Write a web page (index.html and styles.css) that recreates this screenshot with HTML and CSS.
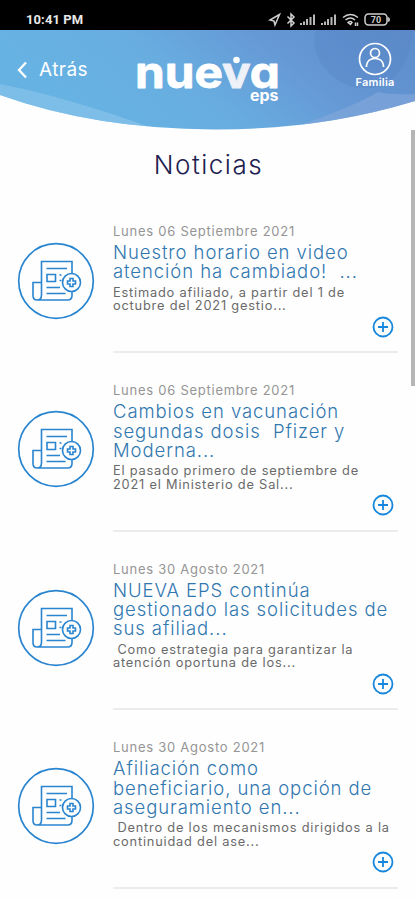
FILE: index.html
```html
<!DOCTYPE html>
<html lang="es">
<head>
<meta charset="utf-8">
<title>Noticias</title>
<link rel="stylesheet" href="styles.css">
</head>
<body>
<svg class="defs" width="0" height="0" aria-hidden="true">
  <symbol id="news" viewBox="0 0 78 78">
    <circle cx="39" cy="39" r="37.3" stroke-width="1.7"/>
    <path d="M24.500 53V19.500H55V31.500M55 50V53.500Q55 58 50.500 58H20Q16 58 16 53.500V40.500H24.500M24.500 53Q24.500 58 20 58"/>
    <path d="M29.500 26.500H50M29.500 45.500H43M29.500 51.500H48.500M30 32.500H38.500V39.500H30ZM42.500 33H44.500M42.500 38.500H44.500"/>
    <circle cx="54.500" cy="40.500" r="9"/>
    <path d="M53 36.500H56V39H58.500V42H56V44.500H53V42H50.500V39H53Z"/>
  </symbol>
  <symbol id="plus" viewBox="0 0 22 22">
    <circle cx="11" cy="11" r="9.500"/><path d="M11 6V16M6 11H16"/>
  </symbol>
</svg>
<div class="status">
  <span class="time">10:41 PM</span>
  <svg class="status-icons" width="124" height="18" viewBox="266 10 124 18">
    <path class="line" d="M279.500 14.500L270 20L274 21L275 25ZM287.500 16.500L294 23L291 26V14L294 17L287.500 23.500"/>
    <path class="bars" d="M300 25V23h2v2zM303 25V21.500h2v3.500zM306 25V19h2v6zM309.500 25V17h2v8zM313 25V14.500h2V25zM321 25V23h2v2zM324 25V21.500h2v3.500zM327 25V19h2v6zM330.500 25V17h2v8zM334 25V14.500h2V25z"/>
    <path class="line" d="M343 17.500Q350.500 11.500 358 17.500M345.500 20Q350.500 16 355 20M348 22.500Q350.500 20.500 352 22.500L350.500 24.500Z"/>
    <path class="line" d="M355.500 22.500V26M357.500 22.500V26"/>
    <rect class="line" x="365" y="14" width="22" height="11" rx="3.500"/><path class="bars" d="M387.500 17Q390 17 390 19.500T387.500 22Z"/>
    <text x="376" y="23" text-anchor="middle">70</text>
  </svg>
</div>
<header class="header">
  <svg class="wave" width="415" height="100" viewBox="0 30 415 100" aria-hidden="true">
    <defs>
      <linearGradient id="sky" x1="0" y1=".3" x2="1" y2="0">
        <stop offset="0" stop-color="#66b3e3"/><stop offset=".35" stop-color="#68ade0"/><stop offset=".65" stop-color="#6598d5"/><stop offset="1" stop-color="#5e8ccb"/>
      </linearGradient>
      <clipPath id="bowl"><path d="M0 30H415V101Q320 130 214 129.500Q95 129 0 95Z"/></clipPath>
    </defs>
    <g clip-path="url(#bowl)">
      <path fill="url(#sky)" d="M0 30H415V130H0Z"/>
      <path fill="#5784c5" opacity=".4" d="M316 30Q310 55 330 74Q352 94 382 86Q408 74 413 30Z"/>
      <path fill="#8ac5ec" opacity=".65" d="M0 84Q70 98 155 129L0 130Z"/>
      <path fill="#83a8db" opacity=".6" d="M300 125Q350 108 378 92Q390 95 415 94V130H300Z"/>
    </g>
  </svg>
  <div class="bar">
    <a class="back"><svg width="11" height="18" viewBox="0 0 11 18"><path d="M9 1.500L2 9L9 16.500"/></svg><span>Atrás</span></a>
    <svg class="logo" width="146" height="60" viewBox="135 50 146 60">
      <text class="brand" x="135" y="88" textLength="145" lengthAdjust="spacingAndGlyphs">nue<tspan class="v">v</tspan>a</text>
      <text class="sub" x="250" y="101" textLength="28.500" lengthAdjust="spacingAndGlyphs">eps</text>
      <circle cx="236.500" cy="60" r="3.300"/>
    </svg>
    <div class="family">
      <svg width="34" height="34" viewBox="0 0 34 34"><circle cx="17" cy="17" r="15.500"/><circle cx="17" cy="11" r="4.500"/><path d="M8.500 25V23.500Q9.500 16.500 17 16.500T25.500 23.500V25"/></svg>
      <span>Familia</span>
    </div>
  </div>
</header>
<main>
  <h1>Noticias</h1>
  <article class="item first">
    <svg class="news"><use href="#news"/></svg>
    <div class="content"><time>Lunes 06 Septiembre 2021</time>
      <h2>Nuestro horario en video<br>atención ha cambiado!&nbsp; ...</h2>
      <p>Estimado afiliado, a partir del 1 de<br>octubre del 2021 gestio...</p>
      <svg class="plus"><use href="#plus"/></svg></div>
  </article>
  <article class="item">
    <svg class="news"><use href="#news"/></svg>
    <div class="content"><time>Lunes 06 Septiembre 2021</time>
      <h2>Cambios en vacunación<br>segundas dosis&nbsp; Pfizer y<br>Moderna...</h2>
      <p>El pasado primero de septiembre de<br>2021 el Ministerio de Sal...</p>
      <svg class="plus"><use href="#plus"/></svg></div>
  </article>
  <article class="item">
    <svg class="news"><use href="#news"/></svg>
    <div class="content"><time>Lunes 30 Agosto 2021</time>
      <h2>NUEVA EPS continúa<br>gestionado las solicitudes de<br>sus afiliad...</h2>
      <p>&nbsp;Como estrategia para garantizar la<br>atención oportuna de los...</p>
      <svg class="plus"><use href="#plus"/></svg></div>
  </article>
  <article class="item">
    <svg class="news"><use href="#news"/></svg>
    <div class="content"><time>Lunes 30 Agosto 2021</time>
      <h2>Afiliación como<br>beneficiario, una opción de<br>aseguramiento en...</h2>
      <p>&nbsp;Dentro de los mecanismos dirigidos a la<br>continuidad del ase...</p>
      <svg class="plus"><use href="#plus"/></svg></div>
  </article>
</main>
<div class="scroll"></div>
</body>
</html>
```
FILE: styles.css
```css
* { box-sizing: border-box; }
body { margin: 0; width: 415px; height: 900px; overflow: hidden; background: #fefefe; font-family: Inter, "Liberation Sans", sans-serif; position: relative; }
.defs { position: absolute; }
svg { display: block; flex: none; }
.status { height: 30px; background: #000; color: #e8e8e8; display: flex; justify-content: space-between; padding: 10px 25px 0 26px; }
.time { font: 700 13px/20px Roboto, sans-serif; letter-spacing: .1px; }
.status-icons .line { fill: none; stroke: #d0d0d0; stroke-width: 1.5; }
.status-icons .bars { fill: #b8b8b8; }
.status-icons text { font: 700 9px Roboto, sans-serif; fill: #ccc; }
.header { height: 100px; display: grid; }
.wave, .bar { grid-area: 1 / 1; }
.bar { display: flex; align-items: flex-start; color: #fff; position: relative; }
.back { display: flex; align-items: center; gap: 11px; width: 118px; padding-left: 17px; margin-top: 28px; font: 400 19px/24px Inter, sans-serif; letter-spacing: .45px; }
.back svg, .family svg { fill: none; stroke: #fff; stroke-width: 2.3; }
.logo { margin: 20px 0 0 17px; fill: #fff; overflow: visible; }
.brand { font: 700 43px Inter, sans-serif; font-feature-settings: "cv11"; stroke: #fff; stroke-width: .8; stroke-linejoin: round; }
.brand .v { fill: #eef1f7; stroke: #eef1f7; }
.sub { font: 700 15px Inter, sans-serif; }
.family { margin: 12px 0 0 73px; width: 42px; display: flex; flex-direction: column; align-items: center; }
.family svg { stroke-width: 1.7; }
.family span { font: 600 11px/13px Inter, sans-serif; letter-spacing: .25px; }
h1 { margin: 20px 0 0; padding-left: 2px; height: 30px; text-align: center; font-size: 26px; line-height: 30px; font-weight: 350; letter-spacing: 1.5px; color: #20204f; }
.item { display: flex; align-items: flex-start; padding-left: 17px; height: 178.5px; padding-top: 28px; }
.item .news { margin-top: 29px; }
.item.first { height: 173.3px; padding-top: 42px; }
.item.first .news { margin-top: 20px; }
.news { width: 78px; height: 78px; fill: none; stroke: #2a85d0; stroke-width: 1.6; }
.content { width: 285px; height: 100%; margin-left: 18px; border-bottom: 2px solid #ececec; display: flex; flex-direction: column; white-space: nowrap; }
time { font-size: 13px; line-height: 18px; letter-spacing: .74px; color: #959595; }
h2 { margin: 3px 0 0; font-size: 18.5px; line-height: 19.3px; font-weight: 350; letter-spacing: .92px; color: #3177b0; }
p { margin: 4px 0 0; font-size: 12.8px; line-height: 13.8px; letter-spacing: .8px; color: #6a6a6a; }
.plus { width: 22px; height: 22px; margin: 2.5px 4px 0 auto; fill: none; stroke: #1687dc; stroke-width: 1.8; }
.scroll { position: absolute; right: 0; top: 130px; width: 4px; height: 256px; background: #b5b5b5; }
```
